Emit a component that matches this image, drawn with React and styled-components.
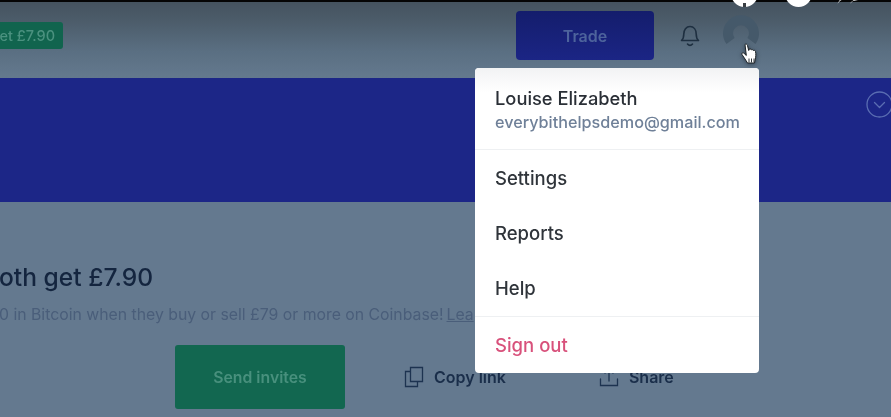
import React from "react";
import styled, { createGlobalStyle } from "styled-components";

const Global = createGlobalStyle`
  html, body { margin: 0; padding: 0; background: #64798f; }
  body { font-family: Inter, "Liberation Sans", sans-serif; }
`;

const Page = styled.div`
  position: relative;
  width: 891px;
  height: 417px;
  overflow: hidden;
  background: #64798f;
  display: flex;
  flex-direction: column;
`;

const Scene = styled.div`
  display: flex;
  flex-direction: column;
  filter: blur(0.7px);
`;

const Header = styled.header`
  height: 78px;
  box-sizing: border-box;
  border-top: 2px solid #050505;
  background: linear-gradient(#45535f 0%, #4c5c6a 25%, #5a6f82 65%, #64798e 100%);
  display: flex;
  align-items: flex-start;
`;

const Badge = styled.div`
  margin-top: 20px;
  width: 63px;
  height: 27px;
  box-sizing: border-box;
  padding-right: 8px;
  border-radius: 0 3px 3px 0;
  background: #11644e;
  color: #4b917f;
  font-size: 14.5px;
  font-weight: 500;
  white-space: nowrap;
  display: flex;
  align-items: center;
  justify-content: flex-end;
`;

const Right = styled.div`
  margin-left: auto;
  margin-right: 131px;
  display: flex;
  align-items: flex-start;
`;

const TradeButton = styled.div`
  margin-top: 9px;
  width: 138px;
  height: 49px;
  border-radius: 4px;
  background: linear-gradient(#141d6c, #1b2585);
  color: #4d639c;
  font-size: 16px;
  font-weight: 600;
  display: flex;
  align-items: center;
  justify-content: center;
`;

const BellIcon = styled.svg`
  margin: 20px 0 0 25px;
  width: 22px;
  height: 26px;
  color: #1e2f40;
`;

const AvatarIcon = styled.svg`
  margin: 12px 0 0 21px;
  width: 38px;
  height: 38px;
  color: #45596a;
`;

const Banner = styled.section`
  height: 124px;
  background: #1c2687;
  display: flex;
  justify-content: flex-end;
  align-items: flex-start;
`;

const ChevronIcon = styled.svg`
  margin: 13px -2px 0 0;
  width: 27px;
  height: 27px;
  color: #5a6db2;
`;

const Body = styled.main`
  padding-top: 61px;
  display: flex;
  flex-direction: column;
`;

const Heading = styled.h2`
  margin: 0 0 0 -1px;
  font-size: 24.600px;
  line-height: 28px;
  font-weight: 500;
  color: #14253f;
  white-space: nowrap;
`;

const Sub = styled.p`
  margin: 14px 0 0 -1px;
  font-size: 15.800px;
  line-height: 20px;
  color: #4a5e7a;
  white-space: nowrap;
`;

const LearnLink = styled.span`
  margin-left: 3px;
  text-decoration: underline;
`;

const Actions = styled.div`
  margin: 20px 0 0 175px;
  display: flex;
  align-items: center;
`;

const SendButton = styled.div`
  width: 170px;
  height: 64px;
  border-radius: 3px;
  background: #126750;
  color: #48907d;
  font-size: 15.800px;
  font-weight: 600;
  display: flex;
  align-items: center;
  justify-content: center;
`;

const ActionLink = styled.div`
  margin-left: ${(p) => p.$gap}px;
  display: flex;
  align-items: center;
  gap: 10px;
  color: #1a2e4a;
  font-size: 16px;
  font-weight: 600;
  white-space: nowrap;
`;

const ActionIcon = styled.svg`
  width: 20px;
  height: 22px;
  color: #1d3350;
`;

const Menu = styled.nav`
  position: absolute;
  left: 475px;
  top: 68px;
  width: 284px;
  height: 305px;
  border-radius: 4px;
  background: #fff;
  display: flex;
  flex-direction: column;
  filter: blur(0.4px);
`;

const MenuHead = styled.div`
  height: 82px;
  box-sizing: border-box;
  padding: 19px 20px 0;
  border-bottom: 1px solid #eef0f2;
  background: linear-gradient(#f2f3f4, #fff 30%);
  border-radius: 4px 4px 0 0;
`;

const Name = styled.div`
  font-size: 18.300px;
  line-height: 22px;
  font-weight: 500;
  color: #2a2f36;
`;

const Email = styled.div`
  margin-top: 3px;
  font-size: 16.200px;
  line-height: 20px;
  font-weight: 500;
  color: #6f8098;
`;

const MenuGroup = styled.div`
  padding-bottom: ${(p) => (p.$rule ? "1px" : "0")};
  display: flex;
  flex-direction: column;
  border-bottom: ${(p) => (p.$rule ? "1px solid #eef0f2" : "none")};
`;

const MenuItem = styled.div`
  height: 55px;
  padding: 0 20px;
  display: flex;
  align-items: center;
  font-size: 18.500px;
  font-weight: 500;
  color: ${(p) => p.$color || "#2f343a"};
`;

const TopGlyphs = styled.div`
  position: absolute;
  left: 731px;
  top: -20px;
  display: flex;
  align-items: flex-start;
  gap: 27px;
`;

const TopDot = styled.div`
  position: relative;
  width: 27px;
  height: 27px;
  border-radius: 50%;
  background: #fff;
`;

const DotMark = styled.span`
  position: absolute;
  left: 12px;
  bottom: 0;
  width: 3px;
  height: 4px;
  background: #3a3f44;
`;

const TopArrow = styled.svg`
  margin: 9px 0 0 -2px;
  width: 26px;
  height: 16px;
`;

const Cursor = styled.svg`
  position: absolute;
  left: 741px;
  top: 43px;
  width: 18px;
  height: 22px;
  filter: drop-shadow(0 1px 2px rgba(20, 30, 40, 0.55));
`;

export default function App() {
  return (
    <Page>
      <Global />
      <Scene>
        <Header>
          <Badge>et £7.90</Badge>
          <Right>
            <TradeButton>Trade</TradeButton>
            <BellIcon viewBox="0 0 22 26" fill="none" stroke="currentColor" strokeWidth="1.6" strokeLinejoin="round" strokeLinecap="round">
              <path d="M2.500 18.500c1.800-1.600 2.300-3 2.300-6.500 0-4.300 2.400-7.500 6.200-7.500s6.200 3.200 6.200 7.500c0 3.500.5 4.900 2.300 6.500z" />
              <path d="M8.500 22c.8 1 1.600 1.400 2.500 1.400s1.700-.4 2.500-1.400" />
            </BellIcon>
            <AvatarIcon viewBox="0 0 38 38" fill="none" stroke="currentColor" strokeWidth="10">
              <path d="M8.500 27A13 13 0 1 1 29.500 27" />
            </AvatarIcon>
          </Right>
        </Header>
        <Banner>
          <ChevronIcon viewBox="0 0 27 27" fill="none" stroke="currentColor" strokeWidth="1.300" strokeLinecap="round" strokeLinejoin="round">
            <circle cx="13.500" cy="13.500" r="12.500" />
            <path d="M8.500 11.500l5 5 5-5" />
          </ChevronIcon>
        </Banner>
        <Body>
          <Heading>oth get £7.90</Heading>
          <Sub>
            0 in Bitcoin when they buy or sell £79 or more on Coinbase!
            <LearnLink>Lea</LearnLink>
          </Sub>
          <Actions>
            <SendButton>Send invites</SendButton>
            <ActionLink $gap={59}>
              <ActionIcon viewBox="0 0 20 22" fill="none" stroke="currentColor" strokeWidth="1.300">
                <path d="M6.500 1.500h12v14h-12z" />
                <path d="M6.500 5.500h-5v15h12v-5" />
              </ActionIcon>
              Copy link
            </ActionLink>
            <ActionLink $gap={93}>
              <ActionIcon viewBox="0 0 20 22" fill="none" stroke="currentColor" strokeWidth="1.300" strokeLinecap="round">
                <path d="M10 15V3M6 7l4-4 4 4" />
                <path d="M1.500 13v6.500h17V13" />
              </ActionIcon>
              Share
            </ActionLink>
          </Actions>
        </Body>
      </Scene>

      <TopGlyphs>
        <TopDot><DotMark /></TopDot>
        <TopDot />
        <TopArrow viewBox="0 0 26 16" fill="#fff">
          <path d="M0 16C2 11 5 8 9 7V2l8 7-8 1c-4 0-7 2-9 6z" />
          <path d="M12 16c2-3 4-5 7-6V6l7-4-5 9-5 1c-1 1-3 2-4 4z" />
        </TopArrow>
      </TopGlyphs>

      <Menu>
        <MenuHead>
          <Name>Louise Elizabeth</Name>
          <Email>everybithelpsdemo@gmail.com</Email>
        </MenuHead>
        <MenuGroup $rule>
          <MenuItem>Settings</MenuItem>
          <MenuItem>Reports</MenuItem>
          <MenuItem>Help</MenuItem>
        </MenuGroup>
        <MenuGroup>
          <MenuItem $color="#d8517b">Sign out</MenuItem>
        </MenuGroup>
      </Menu>

      <Cursor viewBox="0 0 18 22">
        <path
          d="M4 1.500c1-.8 2.200-.3 2.500 1l1.200 5 .6-1.400c1-.4 1.700 0 2 .8.8-.6 1.700-.3 2.100.6.900-.4 1.800 0 2.100 1 .6 2.500.4 5.500-.4 8.500l-.6 3H6.500L4 16 1 11.500c-.5-1.200.6-2.200 1.800-1.400l2.500 2.400z"
          fill="#fff"
          stroke="#1c2226"
          strokeWidth="1"
          strokeLinejoin="round"
        />
        <path d="M8 15.500v4M10.500 15.500v4M13 15.500v4" stroke="#30363a" strokeWidth="1" />
      </Cursor>
    </Page>
  );
}
